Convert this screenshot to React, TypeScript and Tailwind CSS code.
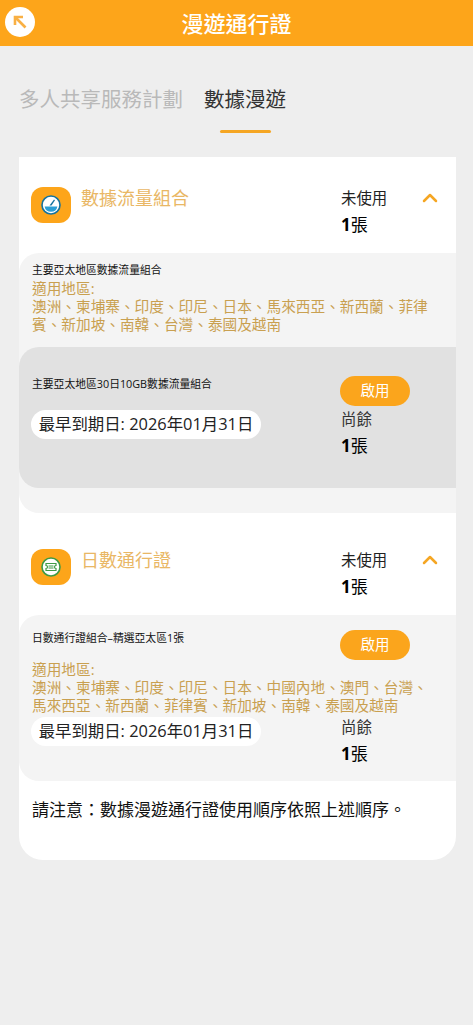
import { ChevronUp } from 'lucide-react'
import { ReactNode } from 'react'

const fontStack = '[font-family:"Open_Sans","Noto_Sans_CJK_TC",sans-serif]'

function PlanIcon({ children }: { children: ReactNode }) {
  return (
    <div className="flex h-[36px] w-[40px] shrink-0 items-center justify-center rounded-[12px] bg-[#fda51a]">
      {children}
    </div>
  )
}

function SectionHeader({ icon, title }: { icon: ReactNode; title: string }) {
  return (
    <div className="flex h-[66px] items-start pl-[12px]">
      <PlanIcon>{icon}</PlanIcon>
      <h2 className="ml-[10px] mt-[-1px] w-[260px] text-[18px] leading-[24px] text-[#e9b765]">{title}</h2>
      <div className="-mt-[1px] w-[77px] text-[15.4px] text-[#222]">
        <p className="leading-[26px]">未使用</p>
        <p className="text-[17px] font-bold leading-[26px] text-black">
          1<span className="font-normal">張</span>
        </p>
      </div>
      <ChevronUp className="-mt-[1px] h-[24px] w-[24px] text-[#f5a623]" strokeWidth={2.5} />
    </div>
  )
}

function EnableButton() {
  return (
    <button
      className="h-[30px] w-[70px] rounded-full bg-[#fba51c] text-center text-[14.5px] text-white"
      type="button"
    >
      啟用
    </button>
  )
}

function Remaining() {
  return (
    <div className="pl-[1px] pt-[1px] text-[15.4px] text-[#333]">
      <p className="leading-[26px]">尚餘</p>
      <p className="text-[17px] font-bold leading-[26px] text-black">
        1<span className="font-normal">張</span>
      </p>
    </div>
  )
}

function ExpiryPill() {
  return (
    <div className="flex h-[29px] w-[230px] items-center justify-center rounded-full bg-white text-[16.4px] text-[#222]">
      最早到期日: 2026年01月31日
    </div>
  )
}

export default function App() {
  return (
    <div className={`min-h-[1025px] bg-[#eeeeee] ${fontStack}`}>
      <header className="relative flex h-[46px] items-center justify-center bg-[#fda51a]">
        <button
          className="absolute left-[5px] top-[7px] flex h-[30px] w-[30px] items-center justify-center rounded-full bg-white"
          type="button"
        >
          <svg className="h-[16px] w-[16px]" viewBox="0 0 16 16" fill="none" stroke="#f9b044" strokeWidth="2.6">
            <path d="M3 11V3h8" />
            <path d="M3.5 3.5 13.5 13.5" />
          </svg>
        </button>
        <h1 className="text-[22px] font-medium text-white">漫遊通行證</h1>
      </header>

      <nav className="flex h-[111px] items-start pl-[19px] pt-[39px] text-[20.5px] leading-[28px]">
        <span className="text-[#b9b9b9]">多人共享服務計劃</span>
        <div className="ml-[21px] flex flex-col items-center">
          <span className="text-[#333]">數據漫遊</span>
          <span className="mt-[17px] h-[3px] w-[51px] rounded-full bg-[#f5a623]" />
        </div>
      </nav>

      <main className="ml-[19px] w-[437px] rounded-b-[24px] bg-white pb-[38px] pt-[30px]">
        <SectionHeader
          title="數據流量組合"
          icon={
            <svg className="h-[20px] w-[20px]" viewBox="0 0 20 20">
              <circle cx="10" cy="10" r="9" fill="white" stroke="#14739f" strokeWidth="1.6" />
              <path d="M3.6 11.5h12.8a6.5 6.5 0 0 1-12.8 0Z" fill="#2a9fd6" />
              <path d="M8.5 10.5 13 4.5l1 .8-3.5 5.2Z" fill="#14739f" />
            </svg>
          }
        />
        <section className="rounded-l-[20px] bg-[#f4f4f4] pb-[25px] pt-[9px]">
          <p className="pl-[13px] text-[10.8px] leading-[16px] text-[#111]">主要亞太地區數據流量組合</p>
          <p className="ml-[13px] w-[400px] pt-[1px] text-[14.67px] leading-[18px] text-[#c9a050]">
            適用地區:
            <br />
            澳洲、柬埔寨、印度、印尼、日本、馬來西亞、新西蘭、菲律賓、新加坡、南韓、台灣、泰國及越南
          </p>
          <div className="mt-[14px] flex h-[141px] rounded-l-[20px] bg-[#e1e1e1] pl-[12px] pt-[29px]">
            <div className="w-[309px]">
              <p className="pl-[1px] text-[10.8px] leading-[16px] text-[#111]">主要亞太地區30日10GB數據流量組合</p>
              <div className="mt-[18px]">
                <ExpiryPill />
              </div>
            </div>
            <div>
              <EnableButton />
              <Remaining />
            </div>
          </div>
        </section>

        <div className="mt-[36px]">
          <SectionHeader
            title="日數通行證"
            icon={
              <svg className="h-[20px] w-[20px]" viewBox="0 0 20 20">
                <circle cx="10" cy="10" r="9" fill="white" stroke="#3f9a45" strokeWidth="1.6" />
                <path
                  d="M5 6.5h10v2a1.5 1.5 0 0 0 0 3v2H5v-2a1.5 1.5 0 0 0 0-3Z"
                  fill="none"
                  stroke="#3f9a45"
                  strokeWidth="1.2"
                />
                <path d="M7.5 9h5M7.5 11h5" stroke="#3f9a45" strokeWidth="1" />
              </svg>
            }
          />
        </div>
        <section className="grid h-[166px] grid-cols-[308px_1fr] content-start rounded-l-[20px] bg-[#f4f4f4] pl-[13px] pt-[15px]">
          <p className="pt-[1px] text-[10.8px] leading-[14px] text-[#111]">日數通行證組合–精選亞太區1張</p>
          <EnableButton />
          <p className="col-span-2 w-[400px] text-[14.67px] leading-[18px] text-[#c9a050]">
            適用地區:
            <br />
            澳洲、柬埔寨、印度、印尼、日本、中國內地、澳門、台灣、馬來西亞、新西蘭、菲律賓、新加坡、南韓、泰國及越南
          </p>
          <div className="-ml-[1px] mt-[3px]">
            <ExpiryPill />
          </div>
          <Remaining />
        </section>

        <p className="mt-[17px] pl-[13px] text-[17px] leading-[24px] text-[#111]">
          請注意：數據漫遊通行證使用順序依照上述順序。
        </p>
      </main>
    </div>
  )
}
